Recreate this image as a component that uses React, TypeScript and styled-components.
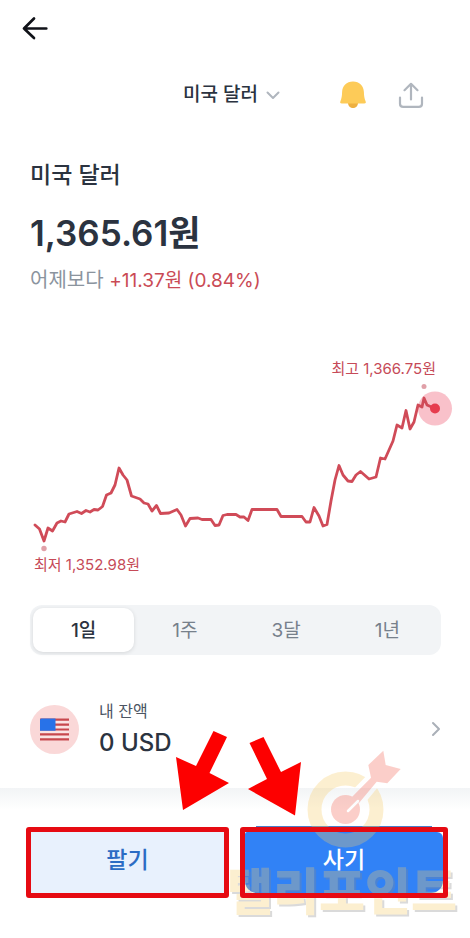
import React, { useState } from "react";
import styled, { createGlobalStyle } from "styled-components";

const GlobalStyle = createGlobalStyle`
  *, *::before, *::after { box-sizing: border-box; }
  body {
    margin: 0;
    background: #fff;
    color: #2b3340;
    font-family: Inter, "Noto Sans CJK KR", sans-serif;
  }
  button { font-family: inherit; border: 0; padding: 0; background: none; color: inherit; cursor: pointer; }
  h1, p { margin: 0; }
  svg { display: block; flex: none; }
`;

const Page = styled.div`
  position: relative;
  min-height: 100vh;
  display: flex;
  flex-direction: column;
  background: #fff;
`;

const TopBar = styled.header`
  display: flex;
  align-items: center;
  height: 56px;
  padding: 0 20px;
`;

const IconButton = styled.button`
  display: flex;
  align-items: center;
  justify-content: center;
  width: 30px;
  height: 30px;
`;

const Toolbar = styled.nav`
  display: grid;
  grid-template-columns: 1fr auto 1fr;
  align-items: center;
  height: 78px;
  padding: 0 44px 0 37px;
`;

const CurrencyButton = styled.button`
  grid-column: 2;
  display: flex;
  align-items: center;
  gap: 8px;
  font-size: 19px;
  line-height: 28px;
  font-weight: 500;
`;

const Actions = styled.div`
  display: flex;
  justify-content: flex-end;
  gap: 28px;
`;

const Summary = styled.section`
  display: flex;
  flex-direction: column;
  padding: 25px 30px 0;
`;

const Title = styled.h1`
  font-size: 23px;
  line-height: 32px;
  font-weight: 500;
`;

const Price = styled.p`
  margin-top: 17px;
  font-size: 35px;
  line-height: 50px;
  font-weight: 600;
`;

const Change = styled.p`
  margin-top: 8px;
  font-size: 20px;
  line-height: 28px;
  color: #8b949e;
`;

const Rise = styled.span`
  font-size: 19px;
  color: #ca4a55;
`;

const Chart = styled.figure`
  display: flex;
  flex-direction: column;
  margin: 63px 0 0;
  color: #c64a58;
  font-size: 15px;
  line-height: 22px;
`;

const ChartLabel = styled.span<{ $end?: boolean }>`
  align-self: ${(p) => (p.$end ? "flex-end" : "flex-start")};
  padding: 0 34px;
`;

const Plot = styled.svg`
  width: 100%;
  height: auto;
`;

const Periods = styled.div`
  display: grid;
  grid-template-columns: repeat(4, 1fr);
  margin: 29px 29px 0 30px;
  padding: 3px;
  border-radius: 12px;
  background: #f2f4f6;
`;

const Period = styled.button<{ $active: boolean }>`
  height: 44px;
  padding-bottom: 4px;
  border-radius: 10px;
  font-size: 19px;
  font-weight: ${(p) => (p.$active ? 500 : 400)};
  color: ${(p) => (p.$active ? "#2b3340" : "#77808b")};
  background: ${(p) => (p.$active ? "#fff" : "transparent")};
  box-shadow: ${(p) => (p.$active ? "0 1px 4px rgba(0, 0, 0, 0.12)" : "none")};
`;

const Balance = styled.button`
  display: flex;
  align-items: center;
  gap: 20px;
  margin: 42px 28px 0 30px;
  text-align: left;
`;

const BalanceText = styled.span`
  flex: 1;
  display: flex;
  flex-direction: column;
`;

const BalanceLabel = styled.span`
  font-size: 16px;
  line-height: 28px;
  color: #4b5563;
`;

const BalanceValue = styled.span`
  font-size: 24px;
  line-height: 36px;
  font-weight: 500;
`;

const Footer = styled.footer`
  display: grid;
  grid-template-columns: 203fr 208fr;
  gap: 11px;
  margin-top: 27px;
  padding: 39px 22px 40px 26px;
  background: linear-gradient(#f2f4f6, #fff 22px);
`;

const Marked = styled.div<{ $primary?: boolean }>`
  position: relative;
  display: flex;
  height: 71px;
  padding: 5px;
  box-shadow: ${(p) => (p.$primary ? "0 -17px 0 -16px #4a7fc8" : "none")};

  &::after {
    content: "";
    position: absolute;
    inset: 0;
    z-index: 2;
    border: 5px solid #e60a12;
    border-radius: 3px;
    pointer-events: none;
  }
`;

const TradeButton = styled.button<{ $primary?: boolean }>`
  flex: 1;
  padding-bottom: 9px;
  font-size: 23px;
  font-weight: 500;
  border-radius: ${(p) => (p.$primary ? "2px 6px 12px 12px" : "0")};
  color: ${(p) => (p.$primary ? "#fff" : "#2b6cc4")};
  background: ${(p) => (p.$primary ? "#3182f6" : "#e8f1fd")};
`;

const Overlay = styled.svg<{ $layer: number }>`
  position: absolute;
  left: 0;
  bottom: 0;
  z-index: ${(p) => p.$layer};
  width: 100%;
  height: auto;
  pointer-events: none;
`;

const Brand = styled.text`
  font-family: "Noto Sans CJK KR", sans-serif;
  font-size: 50px;
  font-weight: 900;
  fill: #f8cd68;
  filter: drop-shadow(2px 2px 0 #888);
`;

const LINE =
  "35,525 39.5,529 44,541 48,528 52.5,531 57,523 61,521 65,522 69,514 77,511.5 81.5,513.5 86,510.5 90,512 94,509.5 98,510 102.5,506.5 106.5,495 111,493 115,485 119,468 123,475 127,480 131.5,496 140,499 144,503 148,504 152,511 156.5,505.5 160.5,513.5 169,513 177,509.5 181,515 185.5,526 190,518.5 198,518 202,519.5 211,519.5 215,525.5 219,525 223,515.5 227,514.5 236,514.5 240,517 244,517 248,520.5 252,509.5 277,509.5 281,516.5 302,516.5 306,522 310,522 314,507.5 319,516 323,526 327,524.5 331,501 335,480 339,465.5 343,475 348,481 352,481.5 356,475 360.5,471.5 369,479 376,477 380.5,458 385,459 393,441 397,425 402,428 406,410.5 410,429 414,422 418,405 422,407 424,398 427,405 435,408.5";

const PERIODS = ["1일", "1주", "3달", "1년"];

const DART = "M351.700 797.300 371 777.700 368.300 765 383.300 750.700 385.700 765 400.700 769 387.300 783.300 376.700 781.700 359 803Z";

function BackIcon() {
  return (
    <svg width="26" height="26" viewBox="0 0 26 26" fill="none" stroke="#101218" strokeWidth="2.700" strokeLinecap="round" strokeLinejoin="round" aria-hidden="true">
      <path d="M24.300 13.500H2M12 3.500 2 13.500l10 9.500" />
    </svg>
  );
}

function BellIcon() {
  return (
    <svg width="28" height="30" viewBox="0 0 28 30" aria-hidden="true">
      <path d="M9 23h10c0 3-2.500 5-5 5s-5-2-5-5Z" fill="#eeb040" />
      <path d="M14 1.500C7.500 1.500 3.300 6 3.100 12c-.1 4-.5 6.500-1.700 9.200C.8 22.500 1.300 23.500 2.800 23.500h22.400c1.500 0 2-1 1.400-2.300-1.200-2.700-1.600-5.200-1.700-9.200C24.700 6 20.500 1.500 14 1.500Z" fill="#fdcb58" />
    </svg>
  );
}

function ShareIcon() {
  return (
    <svg width="26" height="28" viewBox="0 0 26 28" fill="none" stroke="#b0b6be" strokeWidth="2.200" strokeLinecap="round" strokeLinejoin="round" aria-hidden="true">
      <path d="M13 18.500V3M6.500 9.200 13 2.800l6.500 6.400M2 16.500v6.200c0 2 1.200 3.200 3.200 3.200h15.600c2 0 3.200-1.200 3.200-3.200v-6.200" />
    </svg>
  );
}

function FlagIcon() {
  return (
    <svg width="49" height="49" viewBox="0 0 49 49" aria-hidden="true">
      <circle cx="24.500" cy="24.500" r="24.500" fill="#fad8d8" />
      <rect x="10" y="13.500" width="29" height="22" rx="1.500" fill="#fbe4e4" />
      <path d="M10 14.600h29M10 19.600h29M10 24.500h29M10 29.400h29M10 34.400h29" stroke="#c8484e" strokeWidth="2.200" />
      <path d="M11 13.500h14.500v12.300H10V14.500Z" fill="#2872e8" />
    </svg>
  );
}

export default function App() {
  const [period, setPeriod] = useState(PERIODS[0]);
  return (
    <Page>
      <GlobalStyle />
      <TopBar>
        <IconButton aria-label="뒤로"><BackIcon /></IconButton>
      </TopBar>
      <Toolbar>
        <CurrencyButton>
          미국 달러
          <svg width="14" height="14" viewBox="0 0 14 14" fill="none" stroke="#b0b6be" strokeWidth="2" strokeLinecap="round" strokeLinejoin="round" aria-hidden="true">
            <path d="m1.500 4.500 5.500 5.500 5.500-5.500" />
          </svg>
        </CurrencyButton>
        <Actions>
          <IconButton aria-label="알림"><BellIcon /></IconButton>
          <IconButton aria-label="공유"><ShareIcon /></IconButton>
        </Actions>
      </Toolbar>

      <Summary>
        <Title>미국 달러</Title>
        <Price>1,365.61원</Price>
        <Change>어제보다 <Rise>+11.37원 (0.84%)</Rise></Change>
      </Summary>

      <Chart>
        <ChartLabel $end>최고 1,366.75원</ChartLabel>
        <Plot viewBox="0 380 470 174" role="img" aria-label="미국 달러 환율 그래프">
          <circle cx="435" cy="408.500" r="17" fill="#f9c1ca" />
          <polyline points={LINE} fill="none" stroke="#d04b58" strokeWidth="2.800" strokeLinejoin="round" strokeLinecap="round" />
          <circle cx="435" cy="408.500" r="5" fill="#e63c4e" />
          <circle cx="424" cy="386.500" r="2.500" fill="#e0a0a8" />
          <circle cx="44" cy="548.500" r="2.700" fill="#e0a0a8" />
        </Plot>
        <ChartLabel>최저 1,352.98원</ChartLabel>
      </Chart>

      <Periods role="group" aria-label="기간">
        {PERIODS.map((name) => (
          <Period key={name} $active={name === period} aria-pressed={name === period} onClick={() => setPeriod(name)}>
            {name}
          </Period>
        ))}
      </Periods>

      <Balance>
        <FlagIcon />
        <BalanceText>
          <BalanceLabel>내 잔액</BalanceLabel>
          <BalanceValue>0 USD</BalanceValue>
        </BalanceText>
        <svg width="12" height="16" viewBox="0 0 12 16" fill="none" stroke="#aab0b8" strokeWidth="2" strokeLinecap="round" strokeLinejoin="round" aria-hidden="true">
          <path d="m3 2 6 6-6 6" />
        </svg>
      </Balance>

      <Footer>
        <Marked><TradeButton>팔기</TradeButton></Marked>
        <Marked $primary><TradeButton $primary>사기</TradeButton></Marked>
      </Footer>

      <Overlay $layer={1} viewBox="0 720 470 218" aria-hidden="true">
        <mask id="dart-gap" maskUnits="userSpaceOnUse" x="300" y="740" width="110" height="120">
          <rect x="300" y="740" width="110" height="120" fill="#fff" />
          <path d={DART} fill="#000" stroke="#000" strokeWidth="9" />
        </mask>
        <mask id="dart-slit" maskUnits="userSpaceOnUse" x="300" y="740" width="110" height="120">
          <rect x="300" y="740" width="110" height="120" fill="#fff" />
          <path d="M348 811 358 801" stroke="#000" strokeWidth="2.500" strokeLinecap="round" />
        </mask>
        <g opacity="0.300">
          <circle cx="345.500" cy="809.500" r="31" fill="none" stroke="#f8cd68" strokeWidth="14" mask="url(#dart-gap)" />
          <g fill="#f4604f" mask="url(#dart-slit)">
            <path d={DART} />
            <circle cx="345.500" cy="809.500" r="14.500" />
          </g>
        </g>
        <g opacity="0.300">
          <Brand x="227" y="910">탤리포인트</Brand>
        </g>
      </Overlay>
      <Overlay $layer={3} viewBox="0 720 470 218" aria-hidden="true">
        <g fill="#fd0000">
          <path d="M213.500 731 227 737 209.500 773 229 783 183 810 176 757 196 766Z" />
          <path d="M249.500 743 263.500 737 281 772 301 762 295 815.500 248 789 267 779Z" />
        </g>
      </Overlay>
    </Page>
  );
}
